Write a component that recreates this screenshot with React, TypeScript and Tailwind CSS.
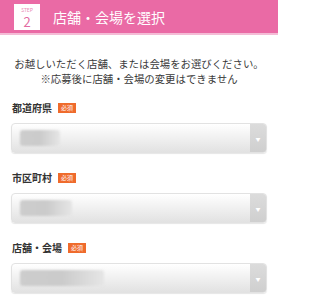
import React from 'react'

const fields = [
  { label: '都道府県', blob: 'w-[40px]' },
  { label: '市区町村', blob: 'w-[52px]' },
  { label: '店舗・会場', blob: 'w-[84px]' },
]

function Select({ blob }: { blob: string }) {
  return (
    <div className="mt-[8px] h-[30px] flex rounded-[4px] border border-[#e2e2e2] bg-gradient-to-b from-white to-[#e2e2e2] shadow-[0_1px_1px_rgba(0,0,0,0.1)] overflow-hidden">
      <div className="flex-1 flex items-center pl-[8px]">
        <div className={`h-[16px] ${blob} rounded-[3px] bg-gradient-to-r from-[#cdcdcd] via-[#cbcbcb] to-[#e6e6e6] blur-[1px]`} />
      </div>
      <div className="w-[16px] flex items-center justify-center bg-gradient-to-b from-[#dcdcdc] to-[#cfcfcf]">
        <span className="text-white text-[5px] leading-none">▼</span>
      </div>
    </div>
  )
}

export default function App() {
  return (
    <div className="w-[278px] h-[300px] bg-white overflow-hidden font-['Noto_Sans_CJK_JP',sans-serif] text-[#333]">
      {/* Header */}
      <div className="h-[35px] bg-[#ea6aa5] border-b-2 border-[#f4bcd6] flex items-center pl-[14px]">
        <div className="w-[26px] h-[26px] bg-white flex flex-col items-center">
          <span className="text-[5px] leading-[5px] mt-[3px] text-[#e98cb6] tracking-tight">STEP</span>
          <span className="text-[13px] leading-[13px] mt-[3px] text-[#e36ba2]">2</span>
        </div>
        <h1 className="ml-[13px] text-white text-[14px] leading-none">店舗・会場を選択</h1>
      </div>

      {/* Intro */}
      <div className="pt-[21px] text-center text-[10.4px] leading-[15px] text-[#3a3a3a]">
        <p>お越しいただく店舗、または会場をお選びください。</p>
        <p>※応募後に店舗・会場の変更はできません</p>
      </div>

      {/* Form */}
      <div className="px-[11px] pt-[15px]">
        {fields.map((f, i) => (
          <div key={f.label} className={i > 0 ? 'mt-[18px]' : ''}>
            <div className="flex items-center gap-[6px] h-[14px] pl-[1px]">
              <span className="text-[10px] font-bold leading-none text-[#333]">{f.label}</span>
              <span className="h-[10px] px-[3px] bg-[#ef6b2c] text-white text-[6px] leading-[10px]">必須</span>
            </div>
            <Select blob={f.blob} />
          </div>
        ))}
      </div>
    </div>
  )
}
